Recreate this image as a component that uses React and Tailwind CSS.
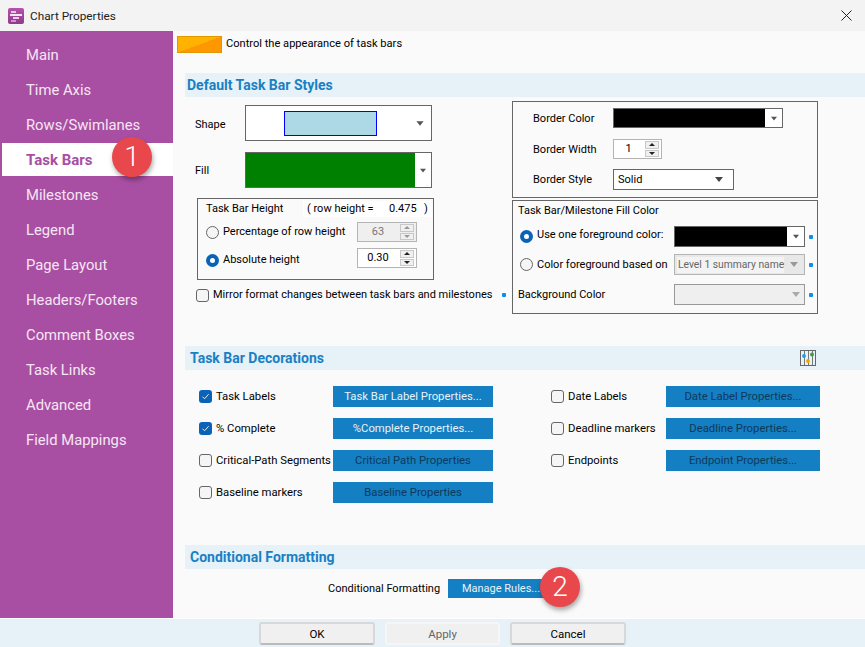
import React from "react";

function Arrow({ color = "border-t-[#555]", className = "" }) {
  return <span className={`block w-0 h-0 border-l-[4px] border-r-[4px] border-t-[5px] border-l-transparent border-r-transparent ${color} ${className}`} />;
}

function Radio({ on, className = "" }) {
  return on ? (
    <span className={`block w-[13px] h-[13px] rounded-full bg-[#0b63b8] flex items-center justify-center shrink-0 ${className}`}>
      <span className="block w-[5px] h-[5px] rounded-full bg-white" />
    </span>
  ) : (
    <span className={`block w-[13px] h-[13px] rounded-full border border-[#666] bg-[#f5f5f5] shrink-0 ${className}`} />
  );
}

function Check({ on }) {
  return on ? (
    <span className="w-[13px] h-[13px] rounded-[3px] bg-[#0b63b8] flex items-center justify-center shrink-0">
      <svg width="9" height="9" viewBox="0 0 9 9" fill="none"><path d="M1.5 4.7 L3.6 6.8 L7.6 2.2" stroke="#dfeaf6" strokeWidth="1" /></svg>
    </span>
  ) : (
    <span className="w-[13px] h-[13px] rounded-[3px] border border-[#666] bg-[#f5f5f5] shrink-0" />
  );
}

function Spin({ value, w, disabled }) {
  const up = disabled ? "border-b-[#999]" : "border-b-[#222]";
  const down = disabled ? "border-t-[#999]" : "border-t-[#222]";
  return (
    <div className={`flex items-center h-[20px] border border-[#b4b4b4] ${disabled ? "bg-[#efefef] text-[#777]" : "bg-white text-black"} ${w}`}>
      <span className="flex-1 text-center pr-[2px]">{value}</span>
      <div className="w-[14px] h-[16px] mr-[2px] flex flex-col gap-[1px]">
        <span className="flex-1 bg-[#f0f0f0] border border-[#c8c8c8] flex items-center justify-center">
          <span className={`w-0 h-0 border-l-[3px] border-r-[3px] border-b-[3px] border-l-transparent border-r-transparent ${up}`} />
        </span>
        <span className="flex-1 bg-[#f0f0f0] border border-[#c8c8c8] flex items-center justify-center">
          <span className={`w-0 h-0 border-l-[3px] border-r-[3px] border-t-[3px] border-l-transparent border-r-transparent ${down}`} />
        </span>
      </div>
    </div>
  );
}

function Dot({ className = "" }) {
  return <span className={`w-[4px] h-[4px] bg-[#0d8fe8] rounded-[1px] shrink-0 ${className}`} />;
}

function SectionHead({ children, right }) {
  return (
    <div className="h-[24px] bg-[#e6f1f8] flex items-center justify-between pl-[2px] pr-[49px]">
      <span className="text-[14px] font-bold text-[#1a80c4]">{children}</span>
      {right}
    </div>
  );
}

function BlueBtn({ children, w, light }) {
  return (
    <div className={`h-[21px] pt-[1px] bg-[#147fc2] flex items-center justify-center shrink-0 text-[11.3px] ${w} ${light ? "text-[#e8f2f9]" : "text-[#0e3a5c]"}`}>{children}</div>
  );
}

function Deco({ label, on, btn, light, w, lw }) {
  return (
    <div className="flex items-center h-[21px]">
      <Check on={on} />
      <span className={`ml-[4px] whitespace-nowrap text-black text-[11.3px] ${lw}`}>{label}</span>
      <BlueBtn w={w} light={light}>{btn}</BlueBtn>
    </div>
  );
}

function FootBtn({ children, disabled, w }) {
  return (
    <div className={`h-[23px] rounded-[3px] border-2 flex items-center justify-center bg-[#f0f0f0] ${w} ${disabled ? "border-[#f6f6f6] text-[#666]" : "border-[#d8d8d8] border-b-[#bbb] text-black"}`}>{children}</div>
  );
}

function Badge({ n, className }) {
  return (
    <div className={`absolute w-[40px] h-[40px] rounded-full bg-[#e8484b] text-white text-[28px] font-light flex items-center justify-center shadow-[1px_3px_5px_rgba(0,0,0,0.35)] ${className}`}>{n}</div>
  );
}

const nav = ["Main", "Time Axis", "Rows/Swimlanes", "Task Bars", "Milestones", "Legend", "Page Layout", "Headers/Footers", "Comment Boxes", "Task Links", "Advanced", "Field Mappings"];

export default function App() {
  return (
    <div className="relative w-[865px] h-[647px] overflow-hidden bg-[#fafafa] flex flex-col text-[11px] leading-[16px] text-black" style={{ fontFamily: 'Roboto, "Open Sans", sans-serif' }}>
      {/* Title bar */}
      <div className="h-[31px] shrink-0 bg-[#f3f3f3] flex items-center pl-[8px] pr-[13px] justify-between">
        <div className="flex items-center gap-[6px]">
          <svg width="16" height="16" viewBox="0 0 16 16">
            <defs>
              <linearGradient id="lg" x1="0" y1="0" x2="0" y2="1">
                <stop offset="0" stopColor="#b552ad" />
                <stop offset="1" stopColor="#8f3a8a" />
              </linearGradient>
            </defs>
            <rect width="16" height="16" rx="2" fill="url(#lg)" />
            <rect x="3" y="3" width="5" height="2" fill="#e9c6e6" />
            <rect x="2" y="6" width="12" height="2" fill="#f6e6f5" />
            <rect x="5" y="9" width="6" height="2" fill="#eccbe9" />
            <rect x="3" y="12" width="5" height="2" fill="#d58ed0" />
          </svg>
          <span className="text-[#222] text-[11.8px]">Chart Properties</span>
        </div>
        <svg width="11" height="11" viewBox="0 0 11 11" fill="none"><path d="M0.5 0.5 L10.5 10.5 M10.5 0.5 L0.5 10.5" stroke="#222" strokeWidth="1" /></svg>
      </div>

      {/* Body */}
      <div className="flex flex-1 min-h-0">
        <div className="w-[173px] shrink-0 bg-[#a94fa3] pt-[6px] pl-[2px] flex flex-col">
          {nav.map((n) => (
            <div key={n} className={`flex items-center pl-[24px] ${n === "Task Bars" ? "bg-white text-[#a94fa3] font-bold h-[33px] my-[1px] text-[15px]" : "h-[35px] text-[14.8px] text-[#f5e6f4]"}`}>{n}</div>
          ))}
        </div>

        <div className="flex-1 min-w-0 flex flex-col">
          <div className="h-[21px] mt-[3px] pl-[4px] flex items-center gap-[4px]">
            <div className="w-[45px] h-[17px] border border-[#e09a00] bg-[linear-gradient(160deg,#ffb300_50%,#ff9800_50%)]" />
            <span className="mb-[2px] text-[11.1px]">Control the appearance of task bars</span>
          </div>

          <div className="ml-[12px] mt-[18px]"><SectionHead>Default Task Bar Styles</SectionHead></div>

          <div className="flex ml-[12px] mt-[4px]">
            {/* Left column */}
            <div className="w-[327px] shrink-0 flex flex-col">
              <div className="flex items-center mt-[4px] h-[36px]">
                <span className="w-[60px] pl-[10px] pt-[3px]">Shape</span>
                <div className="w-[187px] h-[36px] border border-[#666] bg-white flex items-center">
                  <div className="ml-[38px] w-[93px] h-[25px] bg-[#add8e6] border border-[#0000ff]" />
                  <Arrow className="ml-[39px] scale-90" />
                </div>
              </div>
              <div className="flex items-center mt-[11px] h-[36px]">
                <span className="w-[60px] pl-[10px] pt-[2px]">Fill</span>
                <div className="w-[187px] h-[36px] border border-[#666] bg-white flex items-center">
                  <div className="w-[169px] h-full bg-[#008000]" />
                  <Arrow className="ml-[4px] scale-75" />
                </div>
              </div>
              <div className="ml-[12px] mt-[10px] w-[237px] h-[82px] border border-[#666] pl-[8px]">
                <div className="flex items-center h-[17px] mt-[1px]">
                  <span className="w-[97px] whitespace-nowrap">Task Bar Height</span>
                  <div className="bg-white w-[129px] flex items-center pl-[4px] whitespace-nowrap">
                    <span className="w-[82px]">( row height =</span>
                    <span className="w-[35px]">0.475</span>
                    <span>)</span>
                  </div>
                </div>
                <div className="flex items-center mt-[5px] h-[20px]">
                  <Radio />
                  <span className="ml-[4px] w-[134px] whitespace-nowrap">Percentage of row height</span>
                  <Spin value="63" w="w-[60px]" disabled />
                </div>
                <div className="flex items-center mt-[6px] h-[20px]">
                  <Radio on className="mt-[4px]" />
                  <span className="ml-[4px] w-[134px] whitespace-nowrap pt-[4px]">Absolute height</span>
                  <Spin value="0.30" w="w-[60px]" />
                </div>
              </div>
              <div className="flex items-center ml-[11px] mt-[7px] h-[16px]">
                <Check />
                <span className="ml-[4px] w-[280px] whitespace-nowrap text-[11px]">Mirror format changes between task bars and milestones</span>
                <Dot className="ml-[9px]" />
              </div>
            </div>

            {/* Right column */}
            <div className="w-[306px] shrink-0 flex flex-col">
              <div className="h-[97px] border border-[#666] pl-[20px] flex flex-col">
                <div className="flex items-center h-[20px] mt-[6px]">
                  <span className="w-[80px] pt-[1px]">Border Color</span>
                  <div className="w-[170px] h-[20px] border border-[#666] flex items-center bg-white">
                    <div className="w-[151px] h-full bg-black" />
                    <Arrow className="ml-[5px] scale-75" />
                  </div>
                </div>
                <div className="flex items-center h-[20px] mt-[11px]">
                  <span className="w-[80px] pt-[1px]">Border Width</span>
                  <Spin value="1" w="w-[49px]" />
                </div>
                <div className="flex items-center h-[21px] mt-[10px]">
                  <span className="w-[80px]">Border Style</span>
                  <div className="w-[121px] h-[21px] border border-[#666] flex items-center bg-white pl-[4px] justify-between pr-[10px]">
                    <span>Solid</span>
                    <Arrow color="border-t-[#444]" />
                  </div>
                </div>
              </div>
              <div className="h-[114px] mt-[2px] border border-[#666] pl-[5px] flex flex-col">
                <span className="h-[16px] mt-[2px] whitespace-nowrap">Task Bar/Milestone Fill Color</span>
                <div className="flex items-center h-[21px] mt-[7px]">
                  <Radio on className="ml-[2px] mb-[1px]" />
                  <span className="ml-[4px] w-[137px] whitespace-nowrap mb-[3px]">Use one foreground color:</span>
                  <div className="w-[131px] h-[21px] border border-[#666] flex items-center bg-white">
                    <div className="w-[112px] h-full bg-black" />
                    <Arrow className="ml-[5px] scale-75" />
                  </div>
                  <Dot className="ml-[4px]" />
                </div>
                <div className="flex items-center h-[21px] mt-[7px]">
                  <Radio className="ml-[2px]" />
                  <span className="ml-[4px] w-[137px] whitespace-nowrap">Color foreground based on</span>
                  <div className="w-[131px] h-[21px] border border-[#b4b4b4] flex items-center bg-[#e8e8e8] px-[2px] justify-between text-[#666]">
                    <span className="bg-[#f3f3f3] w-[107px] pl-[1px] whitespace-nowrap text-[10.3px]">Level 1 summary name</span>
                    <Arrow color="border-t-[#999]" className="mr-[4px]" />
                  </div>
                  <Dot className="ml-[4px]" />
                </div>
                <div className="flex items-center h-[21px] mt-[9px]">
                  <span className="w-[156px] pt-[1px]">Background Color</span>
                  <div className="w-[131px] h-[21px] border border-[#999] flex items-center justify-end pr-[4px] bg-[#efefef]">
                    <Arrow color="border-t-[#aaa]" />
                  </div>
                  <Dot className="ml-[4px]" />
                </div>
              </div>
            </div>
          </div>

          <div className="ml-[12px] mt-[32px]">
            <SectionHead right={
              <svg width="16" height="16" viewBox="0 0 16 16">
                <rect x="0.5" y="0.5" width="15" height="15" fill="#e6f1f8" stroke="#666" />
                <path d="M4.5 1V15M8.5 1V15M12.5 1V15" stroke="#777" />
                <circle cx="4" cy="6" r="1.9" fill="#1c9be8" />
                <circle cx="8" cy="11" r="1.9" fill="#f2a400" />
                <circle cx="12" cy="4.5" r="1.9" fill="#3f9a3f" />
              </svg>
            }>
              <span className="ml-[3px]">Task Bar Decorations</span>
            </SectionHead>
          </div>

          <div className="ml-[26px] mt-[16px] flex">
            <div className="w-[352px] flex flex-col gap-[11px]">
              <Deco label="Task Labels" on btn="Task Bar Label Properties..." light w="w-[160px]" lw="w-[117px]" />
              <Deco label="% Complete" on btn="%Complete Properties..." light w="w-[160px]" lw="w-[117px]" />
              <Deco label="Critical-Path Segments" btn="Critical Path Properties" w="w-[160px]" lw="w-[117px]" />
              <Deco label="Baseline markers" btn="Baseline Properties" w="w-[160px]" lw="w-[117px]" />
            </div>
            <div className="flex flex-col gap-[11px]">
              <Deco label="Date Labels" btn="Date Label Properties..." w="w-[154px]" lw="w-[98px]" />
              <Deco label="Deadline markers" btn="Deadline Properties..." w="w-[154px]" lw="w-[98px]" />
              <Deco label="Endpoints" btn="Endpoint Properties..." w="w-[154px]" lw="w-[98px]" />
            </div>
          </div>

          <div className="ml-[12px] mt-[42px]"><SectionHead><span className="ml-[3px]">Conditional Formatting</span></SectionHead></div>

          <div className="flex items-center mt-[10px] ml-[155px]">
            <span className="w-[120px] whitespace-nowrap">Conditional Formatting</span>
            <div className="w-[106px] h-[19px] bg-[#147fc2] text-[#e8f2f9] flex items-center justify-center">Manage Rules...</div>
          </div>
        </div>
      </div>

      {/* Footer */}
      <div className="h-[29px] shrink-0 bg-[#e6f1f8] border-t border-white flex items-start pt-[3px] pl-[259px] gap-[10px] text-[11.5px]">
        <FootBtn w="w-[116px]">OK</FootBtn>
        <FootBtn w="w-[115px]" disabled>Apply</FootBtn>
        <FootBtn w="w-[116px]">Cancel</FootBtn>
      </div>

      <Badge n="1" className="left-[112px] top-[137px]" />
      <Badge n="2" className="left-[540px] top-[567px]" />
    </div>
  );
}
